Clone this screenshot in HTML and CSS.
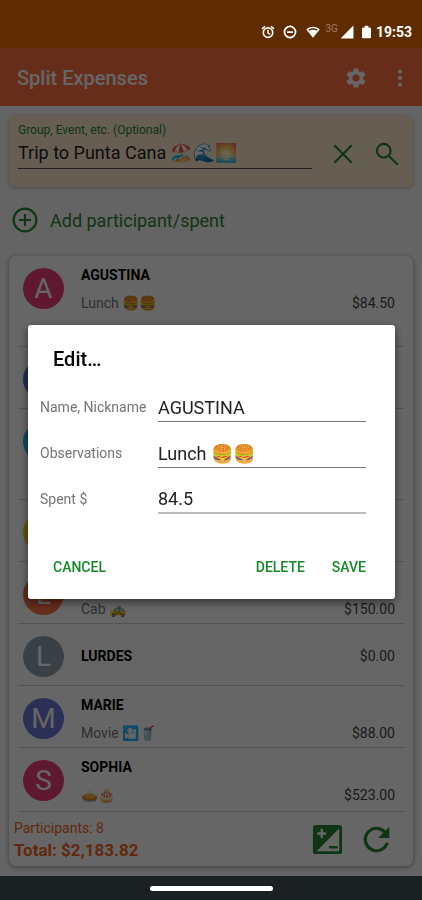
FILE: index.html
```html
<!DOCTYPE html>
<html lang="en">
<head>
<meta charset="utf-8">
<meta name="viewport" content="width=device-width, initial-scale=1">
<title>Split Expenses</title>
<link rel="stylesheet" href="styles.css">
</head>
<body>
<div class="screen">
  <div class="status">
    <svg class="status-icon" viewBox="0 0 24 24"><path d="M23 5.700l-5.200-4.500-1.600 1.900 5.200 4.500zM7.800 3.100L6.200 1.200 1 5.700l1.600 1.900zM12 3.500a9.500 9.500 0 1 0 0 19 9.500 9.500 0 0 0 0-19zm0 16.200a6.700 6.700 0 1 1 0-13.400 6.700 6.700 0 0 1 0 13.400zM13.200 8h-2.500v6l4.500 3 1.200-1.800-3.200-2z"/></svg>
    <svg class="status-icon" viewBox="0 0 24 24"><path d="M12 1a11 11 0 1 0 0 22 11 11 0 0 0 0-22zm0 19a8 8 0 1 1 0-16 8 8 0 0 1 0 16zM7 10.500h10v3H7z"/></svg>
    <svg class="status-icon wide" viewBox="0 0 24 24"><path fill-rule="evenodd" d="M12 3C7.800 3 3.700 4.700.5 7.500L12 22 23.500 7.500C20.300 4.700 16.200 3 12 3zm0 2.500c3 0 5.800 1 8 2.500l-1.500 2C16.700 8.700 14.400 8 12 8s-4.700.7-6.500 2L4 8c2.200-1.500 5-2.500 8-2.500z"/></svg>
    <span class="network">3G</span>
    <svg class="status-icon" viewBox="0 0 24 24"><path d="M1 23h22V1z"/></svg>
    <svg class="battery" viewBox="0 0 10 14"><path d="M3 0h4v2h2l1 1v10l-1 1H1l-1-1V3l1-1h2z"/></svg>
    <span class="clock">19:53</span>
  </div>

  <header class="appbar">
    <h1>Split Expenses</h1>
    <button class="icon-button" aria-label="Settings"><svg class="icon" viewBox="1 1 22 22"><path d="M19.140 12.940c.04-.3.060-.61.060-.94 0-.32-.02-.64-.07-.94l2.030-1.580c.18-.14.23-.41.12-.61l-1.920-3.320c-.12-.22-.37-.29-.59-.22l-2.390.96c-.5-.38-1.030-.7-1.620-.94l-.36-2.540c-.04-.24-.24-.41-.48-.41h-3.840c-.24 0-.43.17-.47.41l-.36 2.540c-.59.24-1.130.57-1.620.94l-2.390-.96c-.22-.08-.47 0-.59.22L2.740 8.870c-.12.21-.08.47.12.61l2.030 1.580c-.05.3-.09.63-.09.94s.02.64.07.94l-2.030 1.580c-.18.14-.23.41-.12.61l1.920 3.320c.12.22.37.29.59.22l2.390-.96c.5.38 1.030.7 1.620.94l.36 2.540c.05.24.24.41.48.41h3.840c.24 0 .44-.17.47-.41l.36-2.540c.59-.24 1.130-.56 1.620-.94l2.390.96c.22.08.47 0 .59-.22l1.920-3.320c.12-.22.07-.47-.12-.61zM12 15.600a3.600 3.600 0 1 1 0-7.200 3.600 3.600 0 0 1 0 7.200z"/></svg></button>
    <button class="icon-button" aria-label="More"><svg class="icon" viewBox="0 0 24 24"><circle cx="12" cy="5" r="2.200"/><circle cx="12" cy="12" r="2.200"/><circle cx="12" cy="19" r="2.200"/></svg></button>
  </header>

  <main class="content">
    <section class="group">
      <div class="group-field">
        <label for="group">Group, Event, etc. (Optional)</label>
        <input id="group" type="text" value="Trip to Punta Cana 🏖️🌊🌅">
      </div>
      <button class="icon-button" aria-label="Clear"><svg class="icon large" viewBox="0 0 24 24"><path d="M4 4l16 16M20 4L4 20" class="stroke"/></svg></button>
      <button class="icon-button" aria-label="Search"><svg class="icon large" viewBox="0 0 24 24"><circle cx="9" cy="9" r="6.300" class="stroke"/><path d="M14 14l8 8" class="stroke"/></svg></button>
    </section>

    <button class="add"><svg class="icon add-icon" viewBox="0 0 24 24"><circle cx="12" cy="12" r="10.500" class="stroke"/><path d="M12 6.500v11M6.500 12h11" class="stroke"/></svg><span>Add participant/spent</span></button>

    <section class="card">
      <ul class="people">
        <li class="person tall"><span class="avatar pink">A</span><div class="details"><strong>AGUSTINA</strong><span class="note">Lunch 🍔🍔</span></div><span class="amount">$84.50</span></li>
        <li class="person"><span class="avatar indigo"></span></li>
        <li class="person tall"><span class="avatar blue"></span></li>
        <li class="person"><span class="avatar yellow"></span></li>
        <li class="person"><span class="avatar orange">L</span><div class="details"><strong></strong><span class="note">Cab 🚕</span></div><span class="amount">$150.00</span></li>
        <li class="person single"><span class="avatar slate">L</span><div class="details"><strong>LURDES</strong></div><span class="amount">$0.00</span></li>
        <li class="person"><span class="avatar violet">M</span><div class="details"><strong>MARIE</strong><span class="note">Movie <span class="cinema">🎦</span>🥤</span></div><span class="amount">$88.00</span></li>
        <li class="person"><span class="avatar pink">S</span><div class="details"><strong>SOPHIA</strong><span class="note">🥧🎂</span></div><span class="amount">$523.00</span></li>
      </ul>
      <footer class="summary">
        <div class="totals"><span>Participants: 8</span><strong>Total: $2,183.82</strong></div>
        <button class="icon-button" aria-label="Settle up"><svg class="icon huge" viewBox="0 0 24 24"><path fill-rule="evenodd" d="M4 2h16a2 2 0 0 1 2 2v16a2 2 0 0 1-2 2H4a2 2 0 0 1-2-2V4a2 2 0 0 1 2-2zm16 2.500V20H4.500zM5 7v1.700h2.200V11h1.700V8.700H11V7H8.900V4.800H7.200V7zm8 9.500v1.700h6v-1.700z"/></svg></button>
        <button class="icon-button" aria-label="Refresh"><svg class="icon huge" viewBox="0 0 24 24"><path d="M17.650 6.350A8 8 0 1 0 19.730 14h-2.080A6 6 0 1 1 12 6c1.660 0 3.140.69 4.220 1.780L13 11h7V4z" transform="translate(-1.200 -1.200) scale(1.100)"/></svg></button>
      </footer>
    </section>
  </main>
  <div class="navbar"><span class="pill"></span></div>
</div>

<div class="scrim">
  <form class="dialog" role="dialog" aria-labelledby="dialog-title">
    <h2 id="dialog-title">Edit…</h2>
    <div class="field"><label for="name">Name, Nickname</label><input id="name" type="text" value="AGUSTINA"></div>
    <div class="field"><label for="notes">Observations</label><input id="notes" type="text" value="Lunch 🍔🍔"></div>
    <div class="field"><label for="spent">Spent $</label><input id="spent" class="focused" type="text" value="84.5"></div>
    <div class="actions">
      <button type="button" class="cancel">CANCEL</button>
      <button type="button">DELETE</button>
      <button type="button">SAVE</button>
    </div>
  </form>
</div>
</body>
</html>
```
FILE: styles.css
```css
* { box-sizing: border-box; }
body { margin: 0; font-family: Roboto, "Noto Color Emoji", sans-serif; font-size: 14px; color: #000; }
button { border: 0; padding: 0; background: none; font: inherit; color: inherit; }
input { border: 0; padding: 0; background: none; font: inherit; color: #222; width: 100%; border-radius: 0; outline: 0; }
h1, h2 { margin: 0; font-weight: 500; }
ul { margin: 0; padding: 0; list-style: none; }
svg { display: block; fill: currentColor; }
.stroke { fill: none; stroke: currentColor; stroke-width: 2; }

.screen { min-height: 100vh; display: flex; flex-direction: column; background: #fafafa; }
.status { position: relative; z-index: 2; height: 48px; padding: 16px 10px 0 0; display: flex; align-items: center; justify-content: flex-end; background: #5e2c00; color: #fff; }
.status-icon { width: 14px; height: 14px; margin-right: 8px; }
.wide { width: 16px; margin-right: 4px; }
.network { color: #a67c62; font-size: 10px; line-height: 10px; margin: 0 2px 6px 0; }
.battery { width: 9px; height: 14px; margin-right: 5px; }
.clock { font-size: 14px; font-weight: 700; }

.appbar { height: 58px; padding: 2px 11px 0 17px; display: flex; align-items: center; gap: 22px; background: #ff7043; color: #fff; }
.appbar h1 { flex: 1; font-size: 20px; }
.icon { width: 22px; height: 22px; }
.large { width: 26px; height: 26px; }
.huge { width: 35px; height: 35px; }

.content { flex: 1; padding: 9px; display: flex; flex-direction: column; color: #2a8432; }
.group { height: 72px; padding: 8px 13px 0 9px; display: flex; gap: 18px; border-radius: 7px; background: #feead0; box-shadow: 0 1px 4px #0004; }
.group-field { flex: 1; }
.group-field label { display: block; font-size: 12px; line-height: 14px; }
.group-field input { height: 32px; font-size: 18px; border-bottom: 1px solid #555; }
.group .icon-button { height: 62px; }
.add { align-self: flex-start; margin: 20px 0 23px 3px; display: flex; align-items: center; gap: 12px; font-size: 18px; }
.add-icon { width: 26px; height: 26px; }

.card { border-radius: 7px; background: #fff; box-shadow: 0 1px 5px #0006; }
.person { height: 62px; margin: 0 9px; padding: 12px 9px 0 5px; display: flex; border-bottom: 1px solid #d0d0d0; }
.tall { height: 91px; }
.avatar { width: 41px; height: 41px; border-radius: 50%; color: #fff; font-size: 28px; line-height: 41px; text-align: center; }
.pink { background: #ec407a; }
.indigo { background: #5c6bdf; }
.blue { background: #29b6f6; }
.yellow { background: #fbd010; }
.orange { background: #ff7043; }
.slate { background: #90a4ae; }
.violet { background: #7078d8; }
.details { flex: 1; margin-left: 17px; display: flex; flex-direction: column; gap: 12px; line-height: 16px; color: #000; }
.details strong { min-height: 16px; }
.note { color: #757575; }
.cinema { filter: hue-rotate(165deg); }
.amount { padding-top: 28px; line-height: 16px; color: #444; }
.single .details, .single .amount { padding: 0; margin-top: 12px; }
.details, .amount { margin-top: -1px; }
.person:last-child { height: 64px; }
.summary { height: 54px; padding: 0 19px 0 5px; display: flex; align-items: center; gap: 14px; }
.totals { flex: 1; display: flex; flex-direction: column; gap: 2px; color: #f26522; line-height: 20px; }
.totals strong { font-size: 17px; }
.navbar { position: relative; z-index: 2; height: 24px; display: flex; justify-content: center; align-items: center; background: #1b2122; }
.pill { width: 123px; height: 5px; border-radius: 3px; background: #fff; }

.scrim { position: fixed; inset: 0; z-index: 1; padding: 24px 27px 0 28px; display: flex; align-items: center; background: #0009; }
.dialog { flex: 1; padding: 20px 29px 14px 12px; border-radius: 3px; background: #fff; box-shadow: 0 3px 10px #0008; }
.dialog h2 { margin: 0 0 20px 13px; font-size: 20px; line-height: 28px; }
.field { height: 46px; display: flex; }
.field label { width: 118px; color: #757575; line-height: 29px; }
.field input { flex: 1; min-width: 0; height: 29px; font-size: 18px; border-bottom: 1px solid #777; }
.field .focused { border-bottom: 2px solid #bbb; }
.actions { margin-left: 13px; display: flex; gap: 27px; color: #168a28; font-weight: 500; line-height: 36px; padding-top: 18px; }
.cancel { margin-right: auto; }
```
